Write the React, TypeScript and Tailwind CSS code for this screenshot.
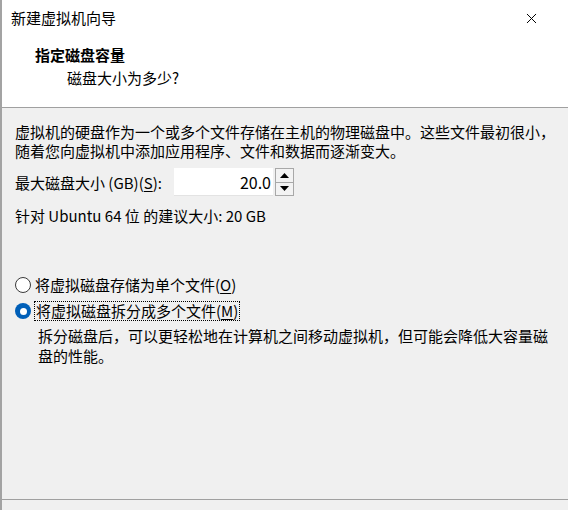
import { X } from "lucide-react";

const FONT = "font-['Noto_Sans_CJK_SC','Noto_Sans',sans-serif]";

export default function App() {
  return (
    <div className={`w-[568px] h-[510px] overflow-hidden bg-[#f0f0f0] text-black border-l-2 border-[#a3a3a3] ${FONT}`}>
      {/* title + header */}
      <div className="bg-white h-[108px] border-b border-[#a0a0a0]">
        <div className="h-[36px] flex items-center justify-between pl-[9px] pr-[28px]">
          <span className="text-[15px] leading-[20px]">新建虚拟机向导</span>
          <X size={17} strokeWidth={1.4} className="text-black" />
        </div>
        <div className="pl-[33px] pt-[9px]">
          <div className="text-[15px] leading-[20px] font-bold">指定磁盘容量</div>
          <div className="text-[15px] leading-[20px] pl-[32px] mt-[3px]">磁盘大小为多少?</div>
        </div>
      </div>

      {/* body */}
      <div className="h-[392px] border-b border-[#a0a0a0] pl-[13px] pt-[14px] text-[15px]">
        <p className="leading-[19px]">
          虚拟机的硬盘作为一个或多个文件存储在主机的物理磁盘中。这些文件最初很小，
          <br />
          随着您向虚拟机中添加应用程序、文件和数据而逐渐变大。
        </p>

        <div className="flex items-center mt-[8px] h-[28px]">
          <span className="w-[159px] leading-[19px]">
            最大磁盘大小 (GB)(<span className="underline underline-offset-2">S</span>):
          </span>
          <div className="w-[99px] h-[28px] bg-white border-b border-[#e3e3e3] flex items-center justify-end pr-[2px] leading-[20px] text-[16px]">
            20.0
          </div>
          <div className="ml-[2px] w-[19px] h-[28px] border border-[#a8a8a8] flex flex-col bg-[#f3f3f3]">
            <div className="flex-1 flex items-center justify-center border-b border-[#a8a8a8]">
              <svg width="9" height="5" viewBox="0 0 9 5"><path d="M4.5 0L9 5H0z" fill="#000" /></svg>
            </div>
            <div className="flex-1 flex items-center justify-center">
              <svg width="9" height="5" viewBox="0 0 9 5"><path d="M0 0H9L4.5 5z" fill="#000" /></svg>
            </div>
          </div>
        </div>

        <p className="leading-[19px] mt-[10px]">针对 Ubuntu 64 位 的建议大小: 20 GB</p>

        <div className="mt-[50px] flex items-center h-[20px]">
          <span className="w-[16px] h-[16px] rounded-full border border-[#3a3a3a] bg-white mr-[4px]" />
          <span className="leading-[20px]">
            将虚拟磁盘存储为单个文件(<span className="underline underline-offset-2">O</span>)
          </span>
        </div>

        <div className="mt-[6px] flex items-center h-[20px]">
          <span className="w-[16px] h-[16px] rounded-full bg-[#005fb8] flex items-center justify-center mr-[3px]">
            <span className="w-[7px] h-[7px] rounded-full bg-white" />
          </span>
          <span className="leading-[18px] border border-dotted border-black px-[1px]">
            将虚拟磁盘拆分成多个文件(<span className="underline underline-offset-2">M</span>)
          </span>
        </div>

        <p className="leading-[20px] pl-[23px] mt-[5px]">
          拆分磁盘后，可以更轻松地在计算机之间移动虚拟机，但可能会降低大容量磁
          <br />
          盘的性能。
        </p>
      </div>
    </div>
  );
}
